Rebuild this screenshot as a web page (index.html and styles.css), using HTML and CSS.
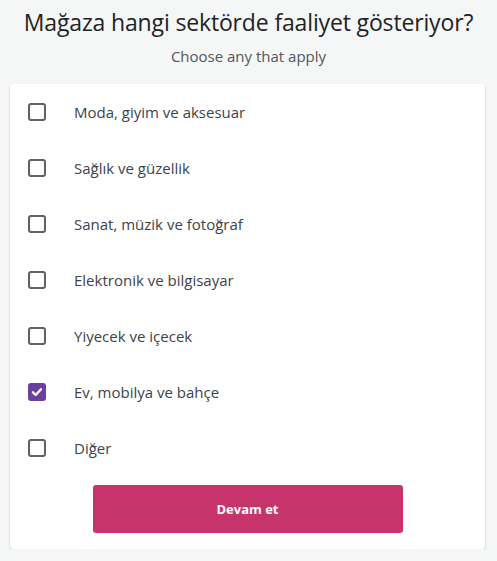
FILE: index.html
```html
<!DOCTYPE html>
<html lang="tr">
  <head>
    <meta charset="utf-8" />
    <meta name="viewport" content="width=device-width, initial-scale=1.0" />
    <title>Mağaza sektörü</title>
    <link rel="stylesheet" href="styles.css">
  </head>
  <body>
    <div class="page">
      <h1 class="title">Mağaza hangi sektörde faaliyet gösteriyor?</h1>
      <p class="subtitle">Choose any that apply</p>

      <div class="card">
        <ul class="options">
          <li class="option"><span class="box"></span><span class="label">Moda, giyim ve aksesuar</span></li>
          <li class="option"><span class="box"></span><span class="label">Sağlık ve güzellik</span></li>
          <li class="option"><span class="box"></span><span class="label">Sanat, müzik ve fotoğraf</span></li>
          <li class="option"><span class="box"></span><span class="label">Elektronik ve bilgisayar</span></li>
          <li class="option"><span class="box"></span><span class="label">Yiyecek ve içecek</span></li>
          <li class="option checked">
            <span class="box">
              <svg viewBox="0 0 18 18" width="18" height="18"><path d="M5 9.3l2.7 2.7L13 6.3" fill="none" stroke="#fff" stroke-width="2.4" stroke-linecap="round" stroke-linejoin="round"/></svg>
            </span>
            <span class="label">Ev, mobilya ve bahçe</span>
          </li>
          <li class="option"><span class="box"></span><span class="label">Diğer</span></li>
        </ul>
        <div class="actions">
          <button class="btn-continue">Devam et</button>
        </div>
      </div>
    </div>
  </body>
</html>
```

FILE: styles.css
```css
body {
  margin: 0;
  font-family: "Open Sans", "Noto Sans", sans-serif;
  background-color: #f5f6f6;
  color: #2c3338;
}

.page {
  padding: 0 10px;
}

.title {
  margin: 0;
  padding-top: 4px;
  font-size: 23px;
  font-weight: 400;
  letter-spacing: -0.15px;
  line-height: 36px;
  text-align: center;
  color: #1e2327;
}

.subtitle {
  margin: 0;
  padding-top: 5px;
  font-size: 15px;
  line-height: 22px;
  text-align: center;
  color: #50575e;
}

.card {
  margin-top: 17px;
  width: 475px;
  background-color: #fff;
  border-radius: 3px;
  box-shadow: 0 1px 2px rgba(0, 0, 0, 0.25);
  padding-bottom: 16px;
}

.options {
  list-style: none;
  margin: 0;
  padding: 0;
}

.option {
  display: flex;
  align-items: center;
  height: 56px;
  padding-left: 18px;
}

.box {
  box-sizing: border-box;
  width: 18px;
  height: 18px;
  border: 2px solid #5f6368;
  border-radius: 3px;
  margin-right: 28px;
  display: flex;
  align-items: center;
  justify-content: center;
}

.checked .box {
  background-color: #6b3fa0;
  border-color: #6b3fa0;
}

.checked .box svg {
  flex-shrink: 0;
}

.label {
  font-size: 15px;
  color: #3c434a;
}

.actions {
  display: flex;
  justify-content: center;
  padding-top: 9px;
}

.btn-continue {
  width: 310px;
  height: 48px;
  border: none;
  border-radius: 3px;
  background-color: #c7346b;
  color: #fff;
  font-family: inherit;
  font-size: 13px;
  font-weight: 700;
  cursor: pointer;
}
```
